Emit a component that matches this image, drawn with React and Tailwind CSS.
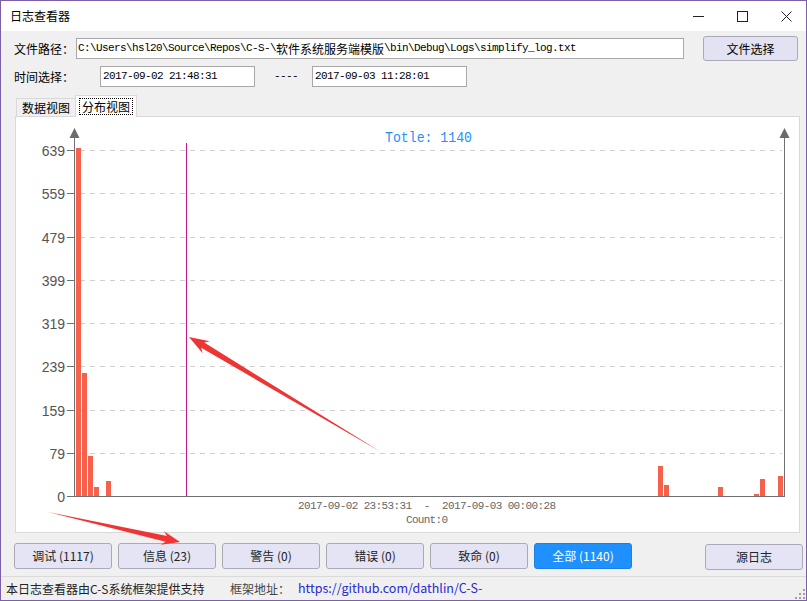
const cjk = "font-['Noto_Sans_CJK_SC',sans-serif]";
const mono = "font-['Liberation_Mono',monospace]";

const bars = [
  [76, 148], [82, 373], [88, 456], [94, 487], [106, 481],
  [658, 466], [664, 485], [718, 487], [754, 494], [760, 479], [778, 476],
];
const labels = ["639", "559", "479", "399", "319", "239", "159", "79", "0"];

function Chart() {
  return (
    <svg width="783" height="415" viewBox="16 117 783 415" className="block">
      {labels.map((l, i) => {
        const y = Math.round(150 + i * 43.25) + 0.5;
        return (
          <g key={l}>
            {l !== "0" && (
              <line x1="80" x2="782" y1={y} y2={y} stroke="#d0d0d0" strokeDasharray="5 5" />
            )}
            <line x1="67" x2="74" y1={y} y2={y} stroke="#707070" />
            <text x="65" y={y + 5} textAnchor="end" fontSize="14" fill="#555" fontFamily="Liberation Sans">
              {l}
            </text>
          </g>
        );
      })}
      {bars.map(([x, top]) => (
        <rect key={x} x={x} y={top} width="5" height={496 - top} fill="#f5614a" />
      ))}
      <line x1="186.5" x2="186.5" y1="143" y2="496" stroke="#c71585" />
      <line x1="74.5" x2="74.5" y1="136" y2="497" stroke="#707070" />
      <polygon points="74.5,128 69.5,138 79.5,138" fill="#6b6b6b" />
      <line x1="784.5" x2="784.5" y1="136" y2="497" stroke="#707070" />
      <polygon points="784.5,128 779.5,138 789.5,138" fill="#6b6b6b" />
      <line x1="67" x2="785" y1="496.5" y2="496.5" stroke="#707070" />
      <text x="385" y="142" fontSize="14" fill="#1e90ff" fontFamily="Liberation Mono" textLength="87" lengthAdjust="spacingAndGlyphs">
        Totle: 1140
      </text>
      <text x="298" y="509" fontSize="11" fill="#666" fontFamily="Liberation Mono" textLength="114">
        2017-09-02 23:53:31
      </text>
      <text x="427" y="509" fontSize="11" fill="#666" fontFamily="Liberation Mono" textAnchor="middle">
        -
      </text>
      <text x="442" y="509" fontSize="11" fill="#666" fontFamily="Liberation Mono" textLength="114">
        2017-09-03 00:00:28
      </text>
      <text x="406" y="523" fontSize="11" fill="#666" fontFamily="Liberation Mono" textLength="42">
        Count:0
      </text>
    </svg>
  );
}

function Btn({ children, active }) {
  return (
    <button
      className={
        active
          ? "w-[98px] h-[26px] rounded-[3px] border border-[#1a80e6] bg-[#1e90ff] text-white text-[12px] leading-none"
          : "w-[98px] h-[26px] rounded-[3px] border border-[#a9a9b8] bg-[#e4e4f4] text-[#222] text-[12px] leading-none"
      }
    >
      {children}
    </button>
  );
}

export default function App() {
  return (
    <div className={`relative w-[807px] h-[601px] border border-[#7b5fa9] bg-[#f0f0f0] flex flex-col overflow-hidden text-black ${cjk}`}>
      {/* title bar */}
      <div className="h-[30px] bg-white flex items-center justify-between pl-[9px]">
        <span className="text-[12px] leading-none">日志查看器</span>
        <div className="flex items-center gap-[33px] pr-[14px]">
          <svg width="11" height="11" viewBox="0 0 11 11">
            <line x1="0" x2="11" y1="5.5" y2="5.5" stroke="#222" />
          </svg>
          <svg width="11" height="11" viewBox="0 0 11 11">
            <rect x="0.5" y="0.5" width="10" height="10" fill="none" stroke="#222" />
          </svg>
          <svg width="11" height="11" viewBox="0 0 11 11">
            <path d="M0.5 0.5 L10.5 10.5 M10.5 0.5 L0.5 10.5" stroke="#222" />
          </svg>
        </div>
      </div>

      {/* file path row */}
      <div className="mt-[5px] h-[25px] flex items-center pl-[13px]">
        <span className="w-[62px] text-[12px] leading-none">文件路径：</span>
        <div className="w-[608px] h-[21px] bg-white border border-[#a8a8a8] flex items-center pl-[1px] whitespace-nowrap overflow-hidden">
          <span className={`${mono} text-[11px] tracking-[-0.6px]`}>C:\Users\hsl20\Source\Repos\C-S-\</span>
          <span className="text-[12px] leading-none">软件系统服务端模版</span>
          <span className={`${mono} text-[11px] tracking-[-0.6px]`}>\bin\Debug\Logs\simplify_log.txt</span>
        </div>
        <button className="ml-[19px] w-[95px] h-[25px] rounded-[3px] border border-[#a9a9b8] bg-[#e2e2f2] text-[12px] leading-none">
          文件选择
        </button>
      </div>

      {/* time row */}
      <div className="mt-[5px] h-[21px] flex items-center pl-[13px]">
        <span className="w-[86px] text-[12px] leading-none">时间选择：</span>
        <div className="w-[155px] h-[21px] bg-white border border-[#a8a8a8] flex items-center pl-[2px]">
          <span className={`${mono} text-[11px] tracking-[-0.6px]`}>2017-09-02 21:48:31</span>
        </div>
        <span className={`ml-[19px] w-[24px] whitespace-nowrap ${mono} text-[11px] tracking-[-0.6px]`}>----</span>
        <div className="ml-[14px] w-[155px] h-[21px] bg-white border border-[#a8a8a8] flex items-center pl-[2px]">
          <span className={`${mono} text-[11px] tracking-[-0.6px]`}>2017-09-03 11:28:01</span>
        </div>
      </div>

      {/* tabs */}
      <div className="mt-[8px] h-[21px] flex items-end pl-[15px]">
        <div className="w-[59px] h-[18px] border-t border-l border-[#d9d9d9] flex items-center justify-center text-[12px] leading-none">
          数据视图
        </div>
        <div className="relative z-10 -mb-px w-[62px] h-[22px] bg-white border-t border-l border-r border-[#d9d9d9] flex items-center justify-center">
          <span className="border border-dotted border-black px-[2px] h-[17px] flex items-center text-[12px] leading-none">
            分布视图
          </span>
        </div>
      </div>

      {/* panel */}
      <div className="ml-[14px] w-[785px] h-[417px] border border-[#d9d9d9] bg-white">
        <Chart />
      </div>

      {/* buttons */}
      <div className="mt-[10px] h-[26px] flex items-center pl-[13px] pr-[3px] gap-[6px]">
        <Btn>调试 (1117)</Btn>
        <Btn>信息 (23)</Btn>
        <Btn>警告 (0)</Btn>
        <Btn>错误 (0)</Btn>
        <Btn>致命 (0)</Btn>
        <Btn active>全部 (1140)</Btn>
        <div className="ml-auto">
          <Btn>源日志</Btn>
        </div>
      </div>

      {/* status bar */}
      <div className="mt-[7px] h-[24px] border-t border-[#dadada] flex items-center pl-[5px] text-[12px] leading-none relative">
        <span className="w-[224px] text-[#222]">本日志查看器由C-S系统框架提供支持</span>
        <span className="w-[68px] text-[#444]">框架地址：</span>
        <span className="text-[#2a2ad0] text-[12.5px]">https://github.com/dathlin/C-S-</span>
        <svg className="absolute right-[1px] bottom-[1px]" width="10" height="10" viewBox="0 0 10 10">
          {[[8, 0], [8, 4], [4, 4], [8, 8], [4, 8], [0, 8]].map(([x, y]) => (
            <rect key={`${x}-${y}`} x={x} y={y} width="2" height="2" fill="#a0a0a0" />
          ))}
        </svg>
      </div>

      {/* annotation arrows */}
      <svg className="absolute -left-px -top-px pointer-events-none" width="807" height="601" viewBox="0 0 807 601">
        <polygon points="189,337 209.8,341.3 204.2,342.6 381,452 201.2,347.8 202.6,353.3" fill="#ef3434" />
        <polygon points="180,542 164,531.2 167,536 48,512 165.6,541.8 160.8,544.8" fill="#ef3434" />
      </svg>
    </div>
  );
}
